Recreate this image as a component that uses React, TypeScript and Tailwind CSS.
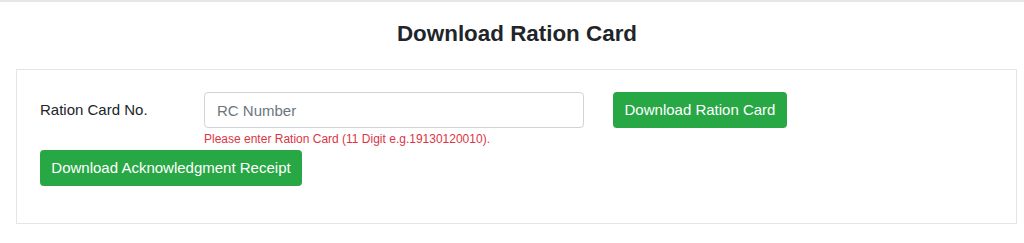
import React from "react";

export default function App() {
  return (
    <div
      className="w-[1024px] h-[243px] bg-white border-t-2 border-[#e6e6e6] text-[#212529]"
      style={{ fontFamily: '"Liberation Sans", Arial, sans-serif' }}
    >
      <h4 className="text-center font-bold text-[22.4px] leading-[26px] pt-[19px] pb-[22px] pl-[10px]">
        Download Ration Card
      </h4>
      <div className="ml-4 w-[1001px] border border-[#e5e5e5] px-[23px] pt-[22px] pb-[37px]">
        <div className="flex items-start">
          <label className="w-[164px] shrink-0 text-[15px] leading-[36px]">Ration Card No.</label>
          <div className="w-[380px] shrink-0">
            <input
              type="text"
              placeholder="RC Number"
              className="w-full h-[36px] px-3 text-[15px] border border-[#ced4da] rounded-[4px] placeholder:text-[#6c757d] outline-none"
            />
            <div className="text-[12px] leading-[19px] text-[#dc3545] mt-[2px]">
              Please enter Ration Card (11 Digit e.g.19130120010).
            </div>
          </div>
          <button className="ml-[29px] h-[36px] w-[174px] rounded-[4px] bg-[#28a745] text-white text-[15px]">
            Download Ration Card
          </button>
        </div>
        <button className="mt-[1px] h-[36px] w-[262px] rounded-[4px] bg-[#28a745] text-white text-[15px]">
          Download Acknowledgment Receipt
        </button>
      </div>
    </div>
  );
}
